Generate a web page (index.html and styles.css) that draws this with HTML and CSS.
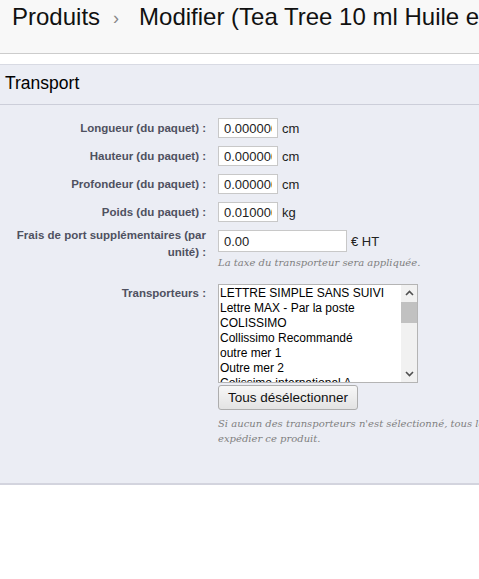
FILE: index.html
```html
<!DOCTYPE html>
<html lang="fr">
<head>
<meta charset="utf-8">
<title>Modifier produit</title>
<link rel="stylesheet" href="styles.css">
</head>
<body>
<div class="page">
  <header class="toolbar">
    <h1 class="title"><span>Produits</span><span class="sep">›</span><span>Modifier (Tea Tree 10 ml Huile essentielle)</span></h1>
  </header>
  <section class="panel">
    <h2 class="panel-head">Transport</h2>
    <div class="form">
      <div class="row">
        <label class="lbl">Longueur (du paquet) :</label>
        <div class="field"><input class="num" type="text" value="0.000000"><span class="unit">cm</span></div>
      </div>
      <div class="row">
        <label class="lbl">Hauteur (du paquet) :</label>
        <div class="field"><input class="num" type="text" value="0.000000"><span class="unit">cm</span></div>
      </div>
      <div class="row">
        <label class="lbl">Profondeur (du paquet) :</label>
        <div class="field"><input class="num" type="text" value="0.000000"><span class="unit">cm</span></div>
      </div>
      <div class="row">
        <label class="lbl">Poids (du paquet) :</label>
        <div class="field"><input class="num" type="text" value="0.010000"><span class="unit">kg</span></div>
      </div>
      <div class="row row-top">
        <label class="lbl lbl-multi">Frais de port supplémentaires (par unité) :</label>
        <div class="field-col">
          <div class="field"><input class="wide" type="text" value="0.00"><span class="unit">€ HT</span></div>
          <p class="hint">La taxe du transporteur sera appliquée.</p>
        </div>
      </div>
      <div class="row row-top row-carriers">
        <label class="lbl lbl-carriers">Transporteurs :</label>
        <div class="field-col">
          <div class="listbox">
            <ul class="options">
              <li>LETTRE SIMPLE SANS SUIVI</li>
              <li>Lettre MAX - Par la poste</li>
              <li>COLISSIMO</li>
              <li>Collissimo Recommandé</li>
              <li>outre mer 1</li>
              <li>Outre mer 2</li>
              <li>Colissimo international A</li>
            </ul>
            <div class="scrollbar">
              <span class="arrow"><svg width="9" height="6" viewBox="0 0 9 6"><path d="M1 5 L4.5 1.5 L8 5" fill="none" stroke="#505050" stroke-width="1.6"/></svg></span>
              <span class="track"><span class="thumb"></span></span>
              <span class="arrow"><svg width="9" height="6" viewBox="0 0 9 6"><path d="M1 1 L4.5 4.5 L8 1" fill="none" stroke="#505050" stroke-width="1.6"/></svg></span>
            </div>
          </div>
          <button class="btn" type="button">Tous désélectionner</button>
          <p class="hint hint-wide">Si aucun des transporteurs n'est sélectionné, tous les transporteurs pourront expédier ce produit.</p>
        </div>
      </div>
    </div>
  </section>
</div>
</body>
</html>
```

FILE: styles.css
```css
html, body {
  margin: 0;
  padding: 0;
  background: #ffffff;
  overflow: hidden;
}
body {
  font-family: "Liberation Sans", Arial, sans-serif;
  color: #000;
}
.page {
  width: 479px;
  overflow: hidden;
}
.toolbar {
  height: 53px;
  background: #f8f8f8;
  border-bottom: 1px solid #cccccc;
  margin-bottom: 10px;
  overflow: hidden;
}
.title {
  margin: 0;
  padding: 3px 0 0 12px;
  font-size: 24px;
  font-weight: normal;
  line-height: 28px;
  white-space: nowrap;
  color: #111;
}
.title .sep {
  color: #888;
  font-size: 18px;
  margin: 0 20px 0 13px;
  position: relative;
  top: -1px;
}
.panel {
  background: #ebedf4;
  border-top: 1px solid #d8dae3;
  border-bottom: 2px solid #d3d4de;
  height: 418px;
}
.panel-head {
  margin: 0;
  height: 40px;
  line-height: 36px;
  padding-left: 5px;
  font-size: 17.5px;
  font-weight: normal;
  color: #000;
  border-bottom: 1px solid #ccced9;
  box-sizing: border-box;
}
.form {
  padding-top: 13px;
  display: flex;
  flex-direction: column;
  gap: 8px;
}
.row {
  display: grid;
  grid-template-columns: 206px 1fr;
  column-gap: 12px;
  align-items: center;
}
.row-top {
  align-items: start;
}
.lbl {
  text-align: right;
  font-size: 11.5px;
  font-weight: bold;
  color: #4f5160;
  line-height: 15px;
  padding-left: 8px;
}
.lbl-multi {
  margin-top: -3px;
  line-height: 17px;
}
.lbl-carriers {
  padding-top: 2px;
}
.field {
  display: flex;
  align-items: center;
  gap: 4px;
}
.field-col {
  display: flex;
  flex-direction: column;
  align-items: flex-start;
}
input {
  font-family: "Liberation Sans", Arial, sans-serif;
  font-size: 13px;
  color: #222;
  background: #fff;
  border: 1px solid #c8c8c8;
  height: 20px;
  box-sizing: border-box;
  padding: 1px 5px;
  margin: 0;
  outline: none;
}
.num {
  width: 60px;
}
.wide {
  width: 129px;
  height: 22px;
}
.unit {
  font-size: 13px;
  color: #222;
}
.hint {
  margin: 3px 0 0 0;
  font-family: "DejaVu Serif", Georgia, serif;
  font-style: italic;
  font-size: 10px;
  color: #7f7f7f;
  line-height: 15px;
}
.hint-wide {
  width: 410px;
  margin-top: 6px;
}
.row-carriers {
  margin-top: 6px;
}
.listbox {
  width: 200px;
  height: 99px;
  background: #fff;
  border: 1px solid #b4b4b4;
  box-sizing: border-box;
  display: flex;
  overflow: hidden;
}
.options {
  list-style: none;
  margin: 0;
  padding: 1px 0 0 1px;
  flex: 1;
  overflow: hidden;
  font-size: 12px;
  line-height: 15px;
  color: #000;
  white-space: nowrap;
}
.scrollbar {
  width: 16px;
  background: #f1f1f1;
  display: flex;
  flex-direction: column;
}
.arrow {
  height: 16px;
  display: flex;
  align-items: center;
  justify-content: center;
}
.track {
  flex: 1;
  padding-top: 1px;
}
.thumb {
  display: block;
  height: 21px;
  background: #c1c1c1;
}
.btn {
  margin-top: 2px;
  height: 25px;
  padding: 0 9px;
  font-family: "Liberation Sans", Arial, sans-serif;
  font-size: 13.5px;
  color: #111;
  background: linear-gradient(#f7f7f7, #e3e3e3);
  border: 1px solid #adadad;
  border-radius: 3px;
}
```
